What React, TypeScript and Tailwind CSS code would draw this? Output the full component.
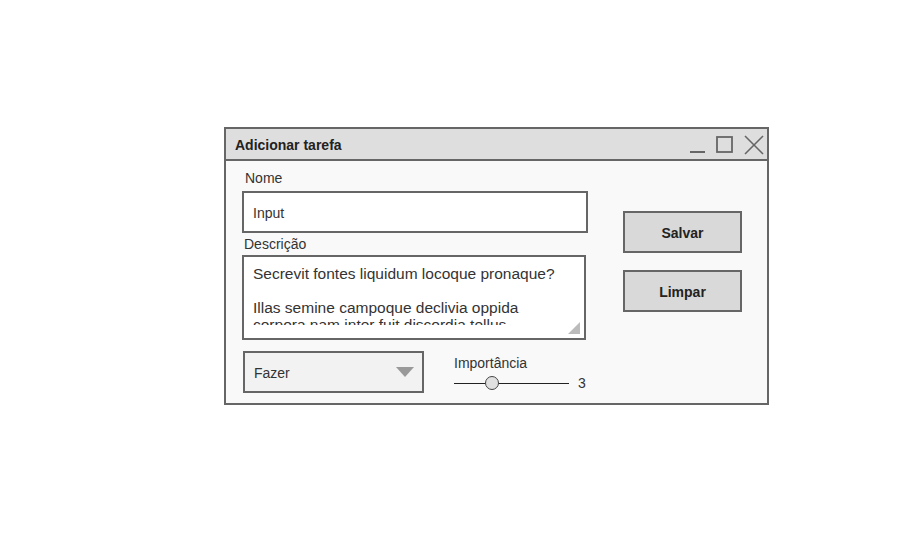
// ReactJS
import { Fragment } from "react";

function WindowControls() {
    return (
        <svg width="78" height="20" viewBox="0 0 78 20" className="ml-auto" fill="none" stroke="#666" strokeWidth="2">
            <line x1="3" y1="17" x2="18" y2="17" />
            <rect x="30" y="2" width="15" height="15" strokeWidth="1.8" />
            <line x1="58" y1="1" x2="76" y2="19" strokeWidth="1.6" />
            <line x1="76" y1="1" x2="58" y2="19" strokeWidth="1.6" />
        </svg>
    );
}

function Slider({ value }: { value: number }) {
    return (
        <div className="flex flex-col">
            <span className="text-[14px] leading-[16px] text-[#333]">Importância</span>
            <div className="mt-[4px] flex items-center">
                <div className="relative h-[16px] w-[115px]">
                    <div className="absolute left-0 right-0 top-[7.5px] h-px bg-[#222]" />
                    <div className="absolute left-[31px] top-[1px] h-[14px] w-[14px] rounded-full border border-[#444] bg-[#e0e0e0]" />
                </div>
                <span className="ml-[9px] text-[14px] leading-[16px] text-[#333]">{value}</span>
            </div>
        </div>
    );
}

export default function App() {
    return (
        <Fragment>
            <main className="min-h-screen bg-white pl-[224px] pt-[127px] font-['Liberation_Sans',Arial,sans-serif]">
                <div className="flex h-[278px] w-[545px] flex-col border-2 border-[#666] bg-[#f9f9f9]">
                    {/* Title bar */}
                    <div className="flex h-[32px] items-center border-b-2 border-[#666] bg-[#dedede] pl-[9px] pr-[2px] pt-[2px]">
                        <span className="text-[14px] font-bold text-[#222]">Adicionar tarefa</span>
                        <WindowControls />
                    </div>

                    {/* Body */}
                    <div className="flex pl-[16px]">
                        <div className="flex flex-col">
                            <label className="ml-[3px] mt-[9px] text-[14px] leading-[16px] text-[#333]">Nome</label>
                            <div className="mt-[5px] flex h-[42px] w-[346px] items-center border-2 border-[#666] bg-white pl-[9px] pt-[2px] text-[14px] text-[#333]">
                                Input
                            </div>
                            <label className="ml-[2px] mt-[3px] text-[14px] leading-[16px] text-[#333]">Descrição</label>
                            <div className="relative mt-[3px] h-[85px] w-[344px] border-2 border-[#666] bg-white pl-[9px] pr-[14px] pt-[8px]">
                                <div className="h-[60px] overflow-hidden text-[15.5px] leading-[17px] text-[#333]">
                                    <p>Secrevit fontes liquidum locoque pronaque?</p>
                                    <p className="mt-[17px]">Illas semine campoque declivia oppida corpora nam inter fuit discordia tellus.</p>
                                </div>
                                <svg width="12" height="12" viewBox="0 0 12 12" className="absolute bottom-[4px] right-[4px]">
                                    <polygon points="12,0 12,12 0,12" fill="#bbb" />
                                </svg>
                            </div>

                            <div className="mt-[11px] flex">
                                <div className="ml-[1px] flex h-[42px] w-[181px] items-center justify-between border-2 border-[#666] bg-[#f2f2f2] pl-[9px] pr-[8px] text-[14px] text-[#333]">
                                    <span className="pt-[2px]">Fazer</span>
                                    <svg width="18" height="10" viewBox="0 0 18 10">
                                        <polygon points="0,0 18,0 9,10" fill="#999" />
                                    </svg>
                                </div>
                                <div className="ml-[30px] mt-[4px]">
                                    <Slider value={3} />
                                </div>
                            </div>
                        </div>

                        <div className="ml-[35px] mt-[50px] flex flex-col gap-[17px]">
                            <button
                                type="button"
                                className="h-[42px] w-[119px] border-2 border-[#666] bg-[#d9d9d9] pt-[2px] text-[14px] font-bold text-[#222]"
                            >
                                Salvar
                            </button>
                            <button
                                type="button"
                                className="h-[42px] w-[119px] border-2 border-[#666] bg-[#d9d9d9] pt-[2px] text-[14px] font-bold text-[#222]"
                            >
                                Limpar
                            </button>
                        </div>
                    </div>
                </div>
            </main>
        </Fragment>
    );
}
